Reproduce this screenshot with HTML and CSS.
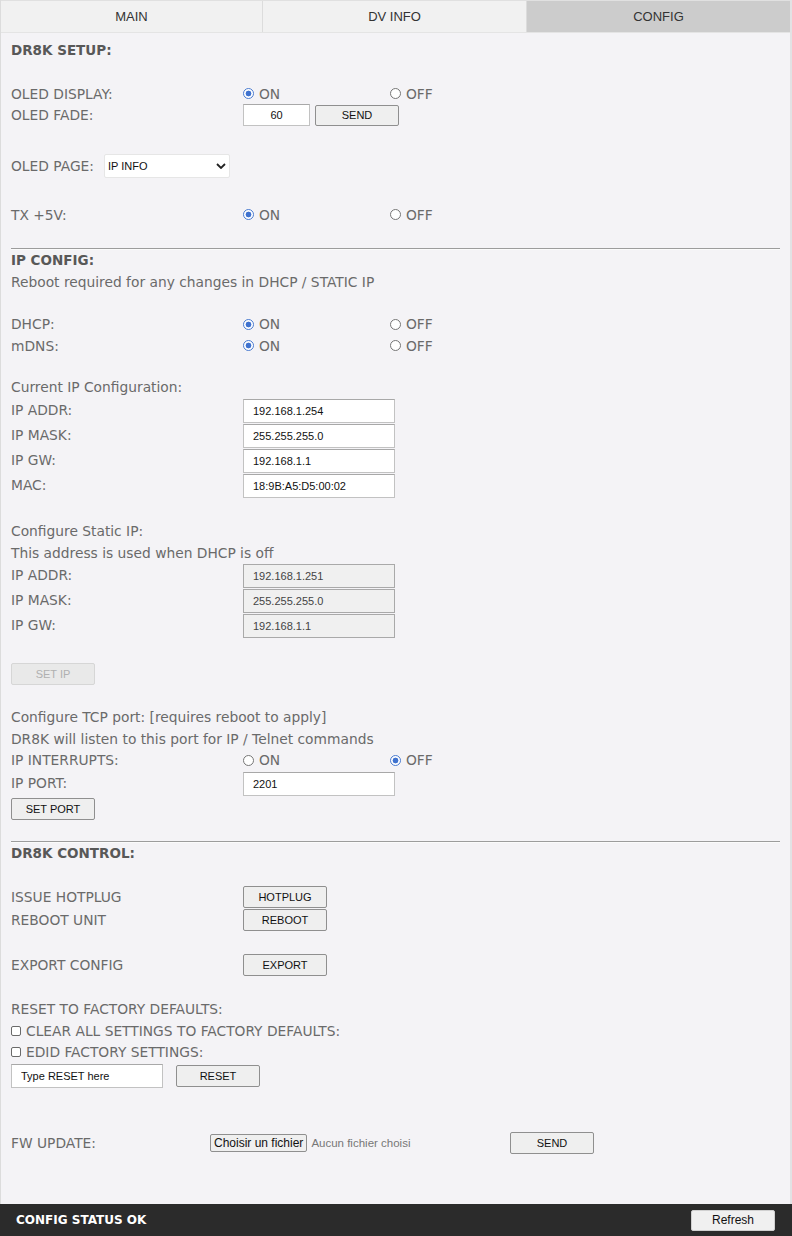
FILE: index.html
```html
<!DOCTYPE html>
<html lang="en">
<head>
<meta charset="utf-8">
<title>DR8K CONFIG</title>
<link rel="stylesheet" href="styles.css">
</head>
<body>
<div class="page">
  <nav class="tabs">
    <div class="tab">MAIN</div>
    <div class="tab">DV INFO</div>
    <div class="tab active">CONFIG</div>
  </nav>

  <main class="content">
    <section class="setup">
      <div class="title">DR8K SETUP:</div>

      <div class="row oled-display">
        <span class="lbl">OLED DISPLAY:</span>
        <label class="opt"><input type="radio" name="oled" checked> ON</label>
        <label class="opt"><input type="radio" name="oled"> OFF</label>
      </div>
      <div class="row fade-row">
        <span class="lbl">OLED FADE:</span>
        <input class="txt fade" type="text" value="60">
        <button class="btn">SEND</button>
      </div>

      <div class="row page-row">
        <span class="lbl-inline">OLED PAGE:</span>
        <span class="select-wrap">
          <select class="sel"><option>IP INFO</option></select>
          <svg class="chev" width="10" height="6" viewBox="0 0 10 6"><path d="M1 1 L5 5 L9 1" fill="none" stroke="#222" stroke-width="1.8"/></svg>
        </span>
      </div>

      <div class="row tx-row">
        <span class="lbl">TX +5V:</span>
        <label class="opt"><input type="radio" name="tx" checked> ON</label>
        <label class="opt"><input type="radio" name="tx"> OFF</label>
      </div>
    </section>

    <hr class="sep sep-1">

    <section class="ipconfig">
      <div class="title">IP CONFIG:</div>
      <div class="row">Reboot required for any changes in DHCP / STATIC IP</div>

      <div class="row dhcp-row">
        <span class="lbl">DHCP:</span>
        <label class="opt"><input type="radio" name="dhcp" checked> ON</label>
        <label class="opt"><input type="radio" name="dhcp"> OFF</label>
      </div>
      <div class="row">
        <span class="lbl">mDNS:</span>
        <label class="opt"><input type="radio" name="mdns" checked> ON</label>
        <label class="opt"><input type="radio" name="mdns"> OFF</label>
      </div>

      <div class="row current-head">Current IP Configuration:</div>
      <div class="fields current">
        <div class="row in"><span class="lbl">IP ADDR:</span><input class="txt ip" type="text" value="192.168.1.254"></div>
        <div class="row in"><span class="lbl">IP MASK:</span><input class="txt ip" type="text" value="255.255.255.0"></div>
        <div class="row in"><span class="lbl">IP GW:</span><input class="txt ip" type="text" value="192.168.1.1"></div>
        <div class="row in"><span class="lbl">MAC:</span><input class="txt ip" type="text" value="18:9B:A5:D5:00:02"></div>
      </div>

      <div class="row static-head">Configure Static IP:</div>
      <div class="row">This address is used when DHCP is off</div>
      <div class="fields static">
        <div class="row in"><span class="lbl">IP ADDR:</span><input class="txt ip" type="text" value="192.168.1.251" disabled></div>
        <div class="row in"><span class="lbl">IP MASK:</span><input class="txt ip" type="text" value="255.255.255.0" disabled></div>
        <div class="row in"><span class="lbl">IP GW:</span><input class="txt ip" type="text" value="192.168.1.1" disabled></div>
      </div>

      <div class="btn-row setip-row"><button class="btn" disabled>SET IP</button></div>

      <div class="row tcp-head">Configure TCP port: [requires reboot to apply]</div>
      <div class="row">DR8K will listen to this port for IP / Telnet commands</div>
      <div class="row">
        <span class="lbl">IP INTERRUPTS:</span>
        <label class="opt"><input type="radio" name="irq"> ON</label>
        <label class="opt"><input type="radio" name="irq" checked> OFF</label>
      </div>
      <div class="row in"><span class="lbl">IP PORT:</span><input class="txt ip" type="text" value="2201"></div>
      <div class="btn-row setport-row"><button class="btn">SET PORT</button></div>
    </section>

    <hr class="sep sep-2">

    <section class="control">
      <div class="title">DR8K CONTROL:</div>
      <div class="row btnline hotplug-row"><span class="lbl">ISSUE HOTPLUG</span><button class="btn">HOTPLUG</button></div>
      <div class="row btnline reboot-row"><span class="lbl">REBOOT UNIT</span><button class="btn">REBOOT</button></div>
      <div class="row btnline export-row"><span class="lbl">EXPORT CONFIG</span><button class="btn">EXPORT</button></div>

      <div class="row reset-head">RESET TO FACTORY DEFAULTS:</div>
      <label class="row chk"><input type="checkbox"> CLEAR ALL SETTINGS TO FACTORY DEFAULTS:</label>
      <label class="row chk"><input type="checkbox"> EDID FACTORY SETTINGS:</label>
      <div class="row in reset-row">
        <input class="txt reset-in" type="text" value="Type RESET here">
        <button class="btn">RESET</button>
      </div>

      <div class="row fw-row">
        <span class="lbl fw-lbl">FW UPDATE:</span>
        <span class="file">
          <span class="file-btn">Choisir un fichier</span>
          <span class="file-name">Aucun fichier choisi</span>
        </span>
        <button class="btn">SEND</button>
      </div>
    </section>
  </main>

  <footer class="status">
    <span class="status-text">CONFIG STATUS OK</span>
    <button class="btn refresh">Refresh</button>
  </footer>
</div>
</body>
</html>
```

FILE: styles.css
```css
* { box-sizing: border-box; }

html, body {
  margin: 0;
  padding: 0;
  background: #f4f3f6;
}

.page {
  width: 792px;
  height: 1236px;
  display: flex;
  flex-direction: column;
  border-left: 1px solid #dcdcdc;
  border-right: 2px solid #e2e2e4;
  font-family: "DejaVu Sans", Verdana, sans-serif;
  font-size: 13.8px;
  color: #6a6a6a;
}

/* tabs */
.tabs {
  display: grid;
  grid-template-columns: 262px 264px 263px;
  height: 33px;
  border-top: 1px solid #e0e0e0;
  border-bottom: 1px solid #e4e4e4;
  background: #f1f1f1;
}
.tab {
  display: flex;
  align-items: center;
  justify-content: center;
  font-family: "Liberation Sans", Arial, sans-serif;
  font-size: 13px;
  color: #333;
  background: #f1f1f1;
  border-right: 1px solid #dcdcdc;
}
.tab.active {
  background: #cccccc;
  border-right: none;
}

/* content */
.content {
  flex: 1;
  padding: 7px 10px 0 10px;
}

.title {
  height: 21.5px;
  line-height: 21.5px;
  font-size: 13.5px;
  font-weight: bold;
  color: #585858;
}

.row {
  display: flex;
  align-items: center;
  height: 21.5px;
  white-space: nowrap;
}
.row.in { height: 25px; }

.lbl {
  width: 232px;
  flex: none;
}
.row.in .lbl { margin-top: -2px; }
.lbl-inline { margin-right: 10px; }

.opt {
  width: 147px;
  display: flex;
  align-items: center;
  flex: none;
}

input[type="radio"] {
  appearance: none;
  -webkit-appearance: none;
  width: 11px;
  height: 11px;
  margin: 0 5px 0 0;
  border: 1px solid #767676;
  border-radius: 50%;
  background: #fff;
}
input[type="radio"]:checked {
  border-color: #4a7bd0;
  background: radial-gradient(circle, #3f72cf 0 2.6px, #fff 3.2px);
}

input[type="checkbox"] {
  appearance: none;
  -webkit-appearance: none;
  width: 10px;
  height: 10px;
  margin: 0 5px 0 0;
  border: 1px solid #6a6a6a;
  border-radius: 2px;
  background: #fff;
}

.txt {
  font-family: "Liberation Sans", Arial, sans-serif;
  font-size: 11px;
  color: #111;
  background: #fff;
  border: 1px solid #c2c2c2;
  border-top-color: #a8a8a8;
  padding: 0 0 0 9px;
  margin: 0;
  outline: none;
}
.txt.ip {
  width: 152px;
  height: 24px;
}
.txt:disabled {
  background: #f0f0f0;
  border-color: #a9a9a9;
  color: #444;
}
.txt.fade {
  width: 67px;
  height: 22px;
  text-align: center;
  padding: 0;
  margin-right: 5px;
}

.btn {
  font-family: "Liberation Sans", Arial, sans-serif;
  font-size: 11px;
  color: #111;
  width: 84px;
  height: 22px;
  padding: 0;
  margin: 0;
  background: #efefef;
  border: 1px solid #8f8f8f;
  border-radius: 2px;
}
.btn:disabled {
  background: #e9e9e9;
  border-color: #d6d6d6;
  color: #b0b0b0;
}
.fade-row .btn { height: 21px; }

.select-wrap {
  position: relative;
  display: inline-block;
}
.sel {
  appearance: none;
  -webkit-appearance: none;
  width: 126px;
  height: 24px;
  padding: 0 0 0 3px;
  margin: 0;
  font-family: "Liberation Sans", Arial, sans-serif;
  font-size: 11px;
  color: #111;
  background: #fff;
  border: 1px solid #e6e6e6;
  border-radius: 2px;
}
.chev {
  position: absolute;
  right: 4px;
  top: 9px;
  pointer-events: none;
}

hr.sep {
  margin: 0;
  height: 0;
  border: none;
  border-top: 1px solid #9c9c9c;
  border-bottom: 1px solid #fbfbfb;
}

/* vertical rhythm */
.oled-display { margin-top: 21.5px; }
.page-row { margin-top: 27.5px; height: 24px; }
.tx-row { margin-top: 26.5px; }
hr.sep-1 { margin-top: 22px; }
.dhcp-row { margin-top: 21px; }
.current-head { margin-top: 20px; }
.fields.current { margin-top: 0; }
.static-head { margin-top: 22.5px; }
.fields.static { margin-top: 0; }
.btn-row { display: flex; }
.setip-row { margin-top: 24px; }
.tcp-head { margin-top: 22px; }
.setport-row { margin-top: 1.5px; }
hr.sep-2 { margin-top: 21px; }

.btnline { height: 22px; }
.hotplug-row { margin-top: 22px; }
.reboot-row { margin-top: 1px; }
.export-row { margin-top: 23px; }
.reset-head { margin-top: 22.5px; }

.reset-in {
  width: 152px;
  height: 24px;
  margin-right: 13px;
}

.fw-row { margin-top: 44px; height: 22px; }
.fw-lbl { width: 199px; }
.file {
  width: 300px;
  display: flex;
  align-items: center;
  font-family: "Liberation Sans", Arial, sans-serif;
  font-size: 12px;
}
.file-btn {
  display: inline-flex;
  align-items: center;
  height: 18px;
  padding: 0 3px;
  background: #efefef;
  border: 1px solid #8f8f8f;
  border-radius: 2px;
  color: #111;
}
.file-name {
  margin-left: 4px;
  font-size: 11.5px;
  color: #777;
}

/* footer */
.status {
  height: 32px;
  flex: none;
  display: flex;
  align-items: center;
  justify-content: space-between;
  padding: 0 17px 0 16px;
  background: #2b2b2b;
  margin-left: -1px;
  margin-right: -2px;
}
.status-text {
  font-family: "DejaVu Sans", Verdana, sans-serif;
  font-weight: bold;
  font-size: 12px;
  color: #fff;
}
.btn.refresh {
  height: 21px;
  font-size: 12px;
  background: #f0f0f0;
  border-color: #d0d0d0;
}
```
